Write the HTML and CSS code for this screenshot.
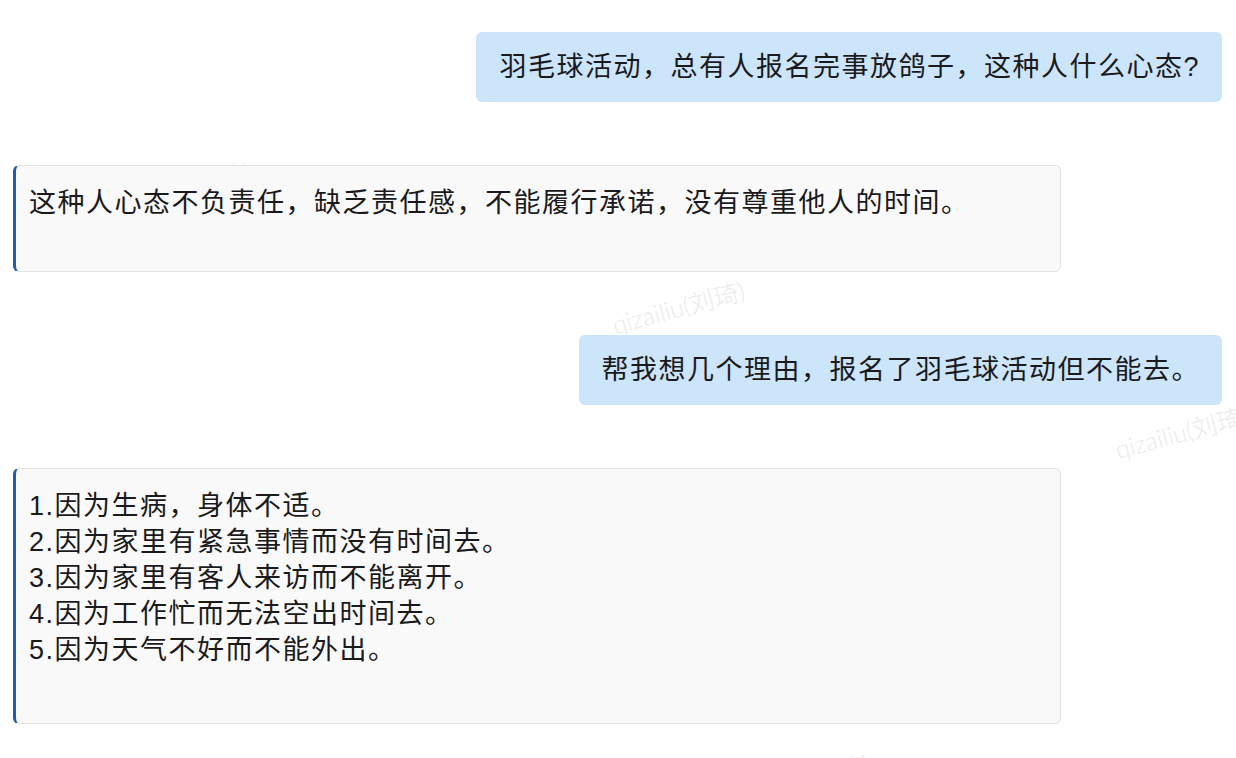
FILE: index.html
```html
<!DOCTYPE html>
<html lang="zh-CN">
<head>
  <meta charset="UTF-8">
  <title>对话</title>
  <link rel="stylesheet" href="styles.css">
</head>
<body>

  <!-- 水印层，在消息下面 -->
  <div class="marcas">
    <span class="marca" style="left: 124px; top: 186px;">qizailiu(刘琦)</span>
    <span class="marca" style="left: 617px; top: 305px;">qizailiu(刘琦)</span>
    <span class="marca" style="left: 1120px; top: 430px;">qizailiu(刘琦)</span>
    <span class="marca" style="left: 742px; top: 778px;">qizailiu(刘琦)</span>
  </div>

  <div class="chat">
    <div class="mensaje usuario">羽毛球活动，总有人报名完事放鸽子，这种人什么心态?</div>

    <div class="mensaje bot">这种人心态不负责任，缺乏责任感，不能履行承诺，没有尊重他人的时间。</div>

    <div class="mensaje usuario">帮我想几个理由，报名了羽毛球活动但不能去。</div>

    <div class="mensaje bot lista">1.因为生病，身体不适。<br>2.因为家里有紧急事情而没有时间去。<br>3.因为家里有客人来访而不能离开。<br>4.因为工作忙而无法空出时间去。<br>5.因为天气不好而不能外出。</div>
  </div>

</body>
</html>
```

FILE: styles.css
```css
body {
  margin: 0;
  background: #ffffff;
  font-family: 'Liberation Sans', 'Noto Sans CJK SC', sans-serif;
  color: #1a1a1c;
  position: relative;
  height: 758px;
  overflow: hidden;
}

.marcas {
  position: absolute;
  top: 0;
  left: 0;
  right: 0;
  bottom: 0;
  z-index: 0;
  overflow: hidden;
}

.marca {
  position: absolute;
  font-family: Lato, 'Noto Sans CJK SC', sans-serif;
  font-size: 25px;
  font-weight: 300;
  color: #ebebeb;
  white-space: nowrap;
  transform: rotate(-15deg);
  transform-origin: left bottom;
}

.chat {
  position: relative;
  z-index: 1;
  display: flex;
  flex-direction: column;
  gap: 63px;
  padding: 32px 14px 0 13px;
}

.mensaje {
  font-size: 27px;
  letter-spacing: 1.5px;
  line-height: 36px;
  box-sizing: border-box;
}

.usuario {
  align-self: flex-end;
  background-color: #cce5fa;
  border-radius: 6px;
  padding: 17px 22px 17px 23px;
}

.bot {
  align-self: flex-start;
  width: 1048px;
  background-color: #f9f9f9;
  border: 1px solid #e2e2e2;
  border-left: 3px solid #2459b4;
  border-radius: 6px;
  padding: 19px 14px 50px 13px;
}

.lista {
  padding-bottom: 55px;
}
```
